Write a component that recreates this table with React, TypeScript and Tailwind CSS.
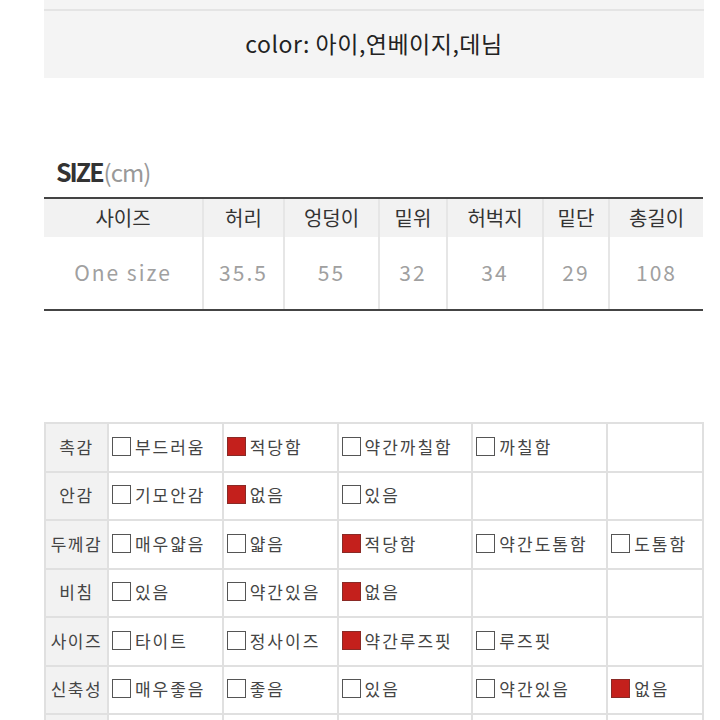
import React from 'react';

const sizeCols = [
  { label: '사이즈', value: 'One size', w: 'w-[158px]' },
  { label: '허리', value: '35.5', w: 'w-[81px]' },
  { label: '엉덩이', value: '55', w: 'w-[95px]' },
  { label: '밑위', value: '32', w: 'w-[68px]' },
  { label: '허벅지', value: '34', w: 'w-[96px]' },
  { label: '밑단', value: '29', w: 'w-[66px]' },
  { label: '총길이', value: '108', w: 'w-[95px]' },
];

type Opt = { text: string; on?: boolean } | null;

const fitRows: { label: string; opts: Opt[] }[] = [
  { label: '촉감', opts: [{ text: '부드러움' }, { text: '적당함', on: true }, { text: '약간까칠함' }, { text: '까칠함' }, null] },
  { label: '안감', opts: [{ text: '기모안감' }, { text: '없음', on: true }, { text: '있음' }, null, null] },
  { label: '두께감', opts: [{ text: '매우얇음' }, { text: '얇음' }, { text: '적당함', on: true }, { text: '약간도톰함' }, { text: '도톰함' }] },
  { label: '비침', opts: [{ text: '있음' }, { text: '약간있음' }, { text: '없음', on: true }, null, null] },
  { label: '사이즈', opts: [{ text: '타이트' }, { text: '정사이즈' }, { text: '약간루즈핏', on: true }, { text: '루즈핏' }, null] },
  { label: '신축성', opts: [{ text: '매우좋음' }, { text: '좋음' }, { text: '있음' }, { text: '약간있음' }, { text: '없음', on: true }] },
  { label: '', opts: [null, null, null, null, null] },
];

const optWidths = ['w-[115px]', 'w-[115px]', 'w-[135px]', 'w-[135px]', 'w-[96px]'];

function Box({ on }: { on?: boolean }) {
  return (
    <span
      className={
        on
          ? 'block w-[19px] h-[19px] mr-[4px] bg-[#c4201c] border border-[#8a2a26] shrink-0'
          : 'block w-[19px] h-[19px] mr-[4px] border-[1.5px] border-[#555] bg-white shrink-0'
      }
    />
  );
}

function App() {
  return (
    <div
      className="w-[720px] h-[720px] overflow-hidden bg-white"
      style={{ fontFamily: '"Noto Sans CJK KR", "Noto Sans", sans-serif' }}
    >
      {/* color box */}
      <div className="ml-[44px] w-[660px] h-[78px] bg-[#f4f4f4] flex flex-col">
        <div className="h-[9px]" />
        <div className="h-[2px] bg-[#e4e4e4]" />
        <div className="flex-1 flex items-center justify-center pb-[2px] text-[23px] text-[#222] tracking-[0.5px]">
          color: 아이,연베이지,데님
        </div>
      </div>

      {/* size heading */}
      <div className="mt-[80px] ml-[56px] h-[26px] flex items-end leading-none">
        <span className="text-[25px] font-bold text-[#333] tracking-[-2px]">SIZE</span>
        <span className="text-[24px] text-[#999] tracking-[-1px] ml-[1px]">(cm)</span>
      </div>

      {/* size table */}
      <div className="mt-[13px] ml-[44px] w-[659px] border-t-2 border-b-2 border-[#444]">
        <div className="flex bg-[#f2f2f2] h-[38px]">
          {sizeCols.map((c, i) => (
            <div
              key={c.label}
              className={`${c.w} flex items-center justify-center text-[20px] text-[#333] ${i > 0 ? 'border-l-2 border-[#e6e6e6]' : ''}`}
            >
              {c.label}
            </div>
          ))}
        </div>
        <div className="flex h-[72px]">
          {sizeCols.map((c, i) => (
            <div
              key={c.label}
              className={`${c.w} flex items-center justify-center text-[21px] text-[#a0a0a0] tracking-[2px] ${i > 0 ? 'border-l-2 border-[#e6e6e6]' : ''}`}
            >
              {c.value}
            </div>
          ))}
        </div>
      </div>

      {/* fit table */}
      <div className="mt-[111px] ml-[44px] w-[660px] border-l-2 border-t-2 border-[#e0e0e0]">
        {fitRows.map((r, ri) => (
          <div key={ri} className="flex h-[48.5px]">
            <div className="w-[63px] bg-[#f2f2f2] border-r-2 border-b-2 border-[#e0e0e0] flex items-center justify-center pb-[2px] text-[17px] text-[#444] tracking-[1.5px]">
              {r.label}
            </div>
            {r.opts.map((o, oi) => (
              <div
                key={oi}
                className={`${optWidths[oi]} border-r-2 border-b-2 border-[#e0e0e0] flex items-center pl-[3px] pb-[2px] text-[17px] text-[#444] tracking-[2px]`}
              >
                {o && (
                  <>
                    <Box on={o.on} />
                    <span>{o.text}</span>
                  </>
                )}
              </div>
            ))}
          </div>
        ))}
      </div>
    </div>
  );
}

export default App;
